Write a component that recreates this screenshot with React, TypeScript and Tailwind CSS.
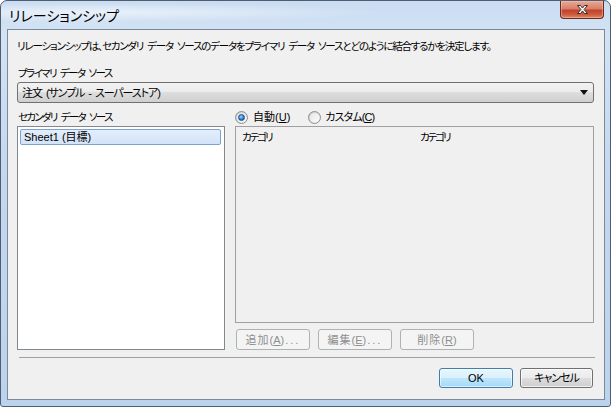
import React from "react";

const ui =
  "font-['Liberation_Sans','Noto_Sans_CJK_JP',sans-serif] [font-feature-settings:'palt'] text-[11px] leading-[12px] text-black";

// a visible gap inside tightly tracked Japanese text
function Sp() {
  return <span className="tracking-[1px]">{" "}</span>;
}

function Radio({ checked }: { checked?: boolean }) {
  return (
    <span className="flex h-[13px] w-[13px] shrink-0 items-center justify-center rounded-full border border-[#8e8f8f] bg-[linear-gradient(135deg,#c6c6c6,#fafafa)]">
      <span className="flex h-[9px] w-[9px] items-center justify-center rounded-full bg-[linear-gradient(135deg,#e6e6e6,#fbfbfb)]">
        {checked && (
          <span className="h-[7px] w-[7px] rounded-full border border-[#1b4f8a] bg-[radial-gradient(circle_at_40%_35%,#9fd8ff,#2a82d4_55%,#124f98)]" />
        )}
      </span>
    </span>
  );
}

function DisabledButton({ label, k, tail }: { label: string; k: string; tail: string }) {
  return (
    <div className="flex h-[21px] w-[74px] items-center justify-center rounded-[3px] border border-[#adb2b5] bg-[#f4f4f4] text-[#8f8f8f]">
      <span className="tracking-[1px]">{label}</span>(<span className="underline">{k}</span>)
      {tail && <span className="ml-[1px] tracking-[2px]">{tail}</span>}
    </div>
  );
}

function CloseGlyph() {
  return (
    <svg width="13" height="11" viewBox="0 0 13 11">
      <path
        d="M1.5 1.5h3l2 2.6 2-2.6h3l-3.4 4 3.4 4h-3l-2-2.6-2 2.6h-3l3.4-4z"
        fill="#ffffff"
        stroke="#3a2a28"
        strokeWidth="1"
        strokeLinejoin="round"
      />
    </svg>
  );
}

export default function App() {
  return (
    <div className={`h-[408px] w-[613px] bg-white ${ui}`}>
      <div className="flex h-[407px] w-[611px] flex-col rounded-t-[7px] rounded-b-[3px] border border-[#4f5d6e] bg-[linear-gradient(180deg,#c9dcf1_0%,#d3e3f5_8%,#c4d8ef_40%,#bcd3ed_100%)]">
        {/* Title bar */}
        <div className="flex h-[28px] items-start justify-between bg-[radial-gradient(ellipse_at_15%_40%,rgba(236,243,251,0.9),rgba(236,243,251,0)_40%)]">
          <div className="mt-[7px] ml-[8px] text-[14px] leading-[16px] text-black [text-shadow:0_0_8px_rgba(255,255,255,0.95)]">
            リレーションシップ
          </div>
          <div className="mr-[6px] flex h-[18px] w-[44px] items-center justify-center rounded-b-[4px] border border-t-0 border-[#6a2b22] bg-[linear-gradient(180deg,#e9a996_0%,#d8806a_45%,#c0432c_55%,#cd5b40_80%,#e08a68_100%)] shadow-[inset_0_0_0_1px_rgba(255,200,180,0.45)]">
            <CloseGlyph />
          </div>
        </div>

        {/* Client area */}
        <div className="ml-[6px] flex h-[371px] w-[598px] flex-col border border-[#7b8a9b] bg-[#f0f0f0] pr-[10px] pl-[9px]">
          <div className="mt-[10px] h-[12px] whitespace-nowrap text-[10.5px] tracking-[-1.2px]">
            リレーションシップは、セカンダリ<Sp />データ<Sp />ソースのデータをプライマリ<Sp />データ<Sp />ソースとどのように結合するかを決定します。
          </div>

          <div className="mt-[15px] ml-[1px] h-[12px] text-[10.5px] tracking-[-1.6px]">
            プライマリ<Sp />データ<Sp />ソース
          </div>

          <div className="mt-[3px] flex h-[21px] items-center justify-between rounded-[3px] border border-[#707070] bg-[linear-gradient(180deg,#f2f2f2_0%,#ebebeb_50%,#dddddd_50%,#cfcfcf_100%)] pr-[5px] pl-[4px]">
            <span className="tracking-[-1.1px]">
              注文<Sp />(サンプル<Sp />-<Sp />スーパーストア)
            </span>
            <svg width="8" height="5" viewBox="0 0 8 5">
              <path d="M0 0h8L4 5z" fill="#111" />
            </svg>
          </div>

          <div className="mt-[7px] flex h-[14px] items-center">
            <div className="w-[218px] pl-[1px] text-[10.5px] tracking-[-1.7px]">
              セカンダリ<Sp />データ<Sp />ソース
            </div>
            <Radio checked />
            <span className="ml-[5px]">
              自動(<span className="underline">U</span>)
            </span>
            <span className="ml-[18px]">
              <Radio />
            </span>
            <span className="ml-[4px] tracking-[-0.9px]">
              カスタム(<span className="underline">C</span>)
            </span>
          </div>

          <div className="mt-[2px] flex h-[224px] gap-[10px]">
            <div className="w-[208px] border border-[#828790] bg-white">
              <div className="mt-[2px] ml-[2px] flex h-[16px] w-[201px] items-center rounded-[2px] border border-[#7da2ce] bg-[linear-gradient(180deg,#e4eefb,#d3e3f8)] pl-[3px]">
                Sheet1 (目標)
              </div>
            </div>
            <div className="flex w-[359px] flex-col">
              <div className="h-[197px] border border-[#a0a0a0] bg-[#f0f0f0]">
                <div className="flex h-[20px] items-center pl-[6px] text-[10.5px] tracking-[-2px]">
                  <span className="w-[178px]">カテゴリ</span>
                  <span>カテゴリ</span>
                </div>
              </div>
              <div className="mt-[6px] flex gap-[8px] pl-[1px]">
                <DisabledButton label="追加" k="A" tail="..." />
                <DisabledButton label="編集" k="E" tail="..." />
                <DisabledButton label="削除" k="R" tail="" />
              </div>
            </div>
          </div>

          <div className="mt-[7px] ml-[2px] mr-[-1px] h-px bg-[#a0a0a0]" />

          <div className="mt-[10px] flex justify-end gap-[7px] pr-[1px]">
            <div className="flex h-[20px] w-[74px] items-center justify-center rounded-[3px] border border-[#3c7fb1] bg-[linear-gradient(180deg,#eaf6fd_0%,#d9f0fc_50%,#bee6fd_50%,#a7d9f5_100%)] shadow-[inset_0_0_0_1px_rgba(255,255,255,0.6)]">
              OK
            </div>
            <div className="flex h-[20px] w-[73px] items-center justify-center rounded-[3px] border border-[#707070] bg-[linear-gradient(180deg,#f2f2f2_0%,#ebebeb_50%,#dddddd_50%,#cfcfcf_100%)] tracking-[-1px] shadow-[inset_0_0_0_1px_rgba(255,255,255,0.7)]">
              キャンセル
            </div>
          </div>
        </div>
      </div>
    </div>
  );
}
